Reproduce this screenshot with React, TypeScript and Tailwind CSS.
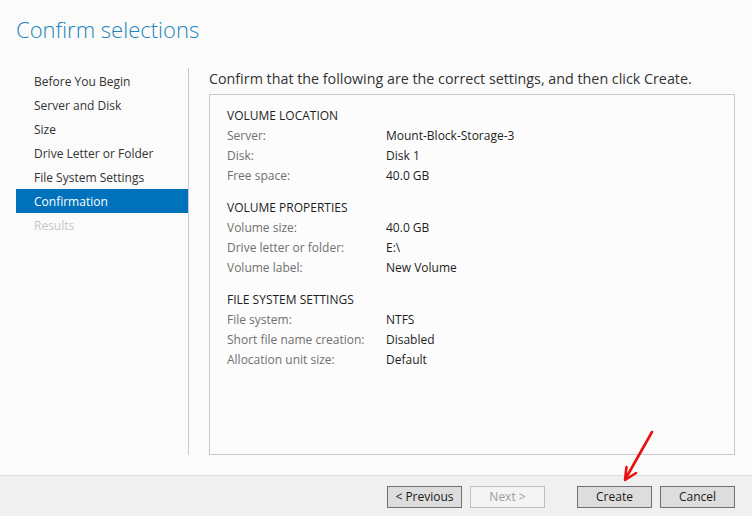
import React from "react";

const steps = [
  "Before You Begin",
  "Server and Disk",
  "Size",
  "Drive Letter or Folder",
  "File System Settings",
  "Confirmation",
  "Results",
];

const sections = [
  {
    title: "VOLUME LOCATION",
    rows: [
      ["Server:", "Mount-Block-Storage-3"],
      ["Disk:", "Disk 1"],
      ["Free space:", "40.0 GB"],
    ],
  },
  {
    title: "VOLUME PROPERTIES",
    rows: [
      ["Volume size:", "40.0 GB"],
      ["Drive letter or folder:", "E:\\"],
      ["Volume label:", "New Volume"],
    ],
  },
  {
    title: "FILE SYSTEM SETTINGS",
    rows: [
      ["File system:", "NTFS"],
      ["Short file name creation:", "Disabled"],
      ["Allocation unit size:", "Default"],
    ],
  },
];

function Button({ label, disabled, className = "" }: { label: string; disabled?: boolean; className?: string }) {
  return (
    <button
      className={`w-[75px] h-[22px] text-[12px] leading-[20px] border ${
        disabled
          ? "border-[#bfbfbf] bg-[#f4f4f4] text-[#9c9c9c]"
          : "border-[#707070] bg-[#dddddd] text-[#1a1a1a]"
      } ${className}`}
    >
      {label}
    </button>
  );
}

export default function App() {
  return (
    <div
      className="relative w-[752px] h-[516px] flex flex-col bg-[#fbfbfb] overflow-hidden"
      style={{ fontFamily: '"Open Sans", "Noto Sans", sans-serif' }}
    >
      {/* title */}
      <div className="h-[68px] pt-[14px] pl-[16px]">
        <h1 className="text-[22px] leading-[30px] font-light text-[#1a86b9]">Confirm selections</h1>
      </div>

      <div className="flex flex-1 min-h-0">
        {/* wizard steps */}
        <div className="pl-[16px] w-[188px]">
          <div className="pt-[1px]">
            {steps.map((s, i) => (
              <div
                key={s}
                className={`h-[24px] pt-[2px] leading-[22px] pl-[18px] text-[12px] ${
                  i === 5
                    ? "bg-[#0072bb] text-white"
                    : i === 6
                    ? "text-[#c6c6c6]"
                    : "text-[#333333]"
                }`}
              >
                {s}
              </div>
            ))}
          </div>
        </div>
        <div className="w-px bg-[#c9c9c9] h-[387px]" />

        {/* content */}
        <div className="ml-[20px] w-[526px] flex flex-col">
          <p className="pt-[1px] text-[14.3px] leading-[20px] text-[#333333]">
            Confirm that the following are the correct settings, and then click Create.
          </p>
          <div className="mt-[5px] h-[361px] border border-[#c8c8c8] bg-[#fcfcfc] pl-[17px] pt-[11px]">
            {sections.map((sec, i) => (
              <div key={sec.title} className={i > 0 ? "mt-[12px]" : ""}>
                <div className="h-[20px] leading-[20px] text-[12px] text-[#1e1e1e]">{sec.title}</div>
                {sec.rows.map(([k, v]) => (
                  <div key={k} className="flex h-[20px] leading-[20px] text-[12px]">
                    <span className="w-[159px] text-[#707070]">{k}</span>
                    <span className="text-[#1e1e1e]">{v}</span>
                  </div>
                ))}
              </div>
            ))}
          </div>
        </div>
      </div>

      {/* footer */}
      <div className="h-[41px] border-t border-[#dedede] bg-[#f0f0f0] flex items-start pt-[10px] pl-[387px]">
        <Button label="< Previous" />
        <Button label="Next >" disabled className="ml-[8px]" />
        <Button label="Create" className="ml-[32px]" />
        <Button label="Cancel" className="ml-[8px]" />
      </div>

      {/* annotation arrow */}
      <svg className="absolute left-0 top-0 pointer-events-none" width="752" height="516">
        <path d="M652 432 L626 478" stroke="#e81010" strokeWidth="2.6" strokeLinecap="round" fill="none" />
        <path d="M626.5 467 L625 480 L636 473" stroke="#e81010" strokeWidth="2.6" strokeLinecap="round" strokeLinejoin="round" fill="none" />
      </svg>
    </div>
  );
}
